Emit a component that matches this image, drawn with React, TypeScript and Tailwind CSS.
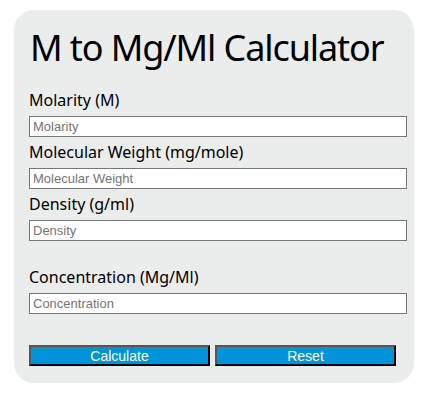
import React from 'react';

const fields = [
  { label: 'Molarity (M)', placeholder: 'Molarity' },
  { label: 'Molecular Weight (mg/mole)', placeholder: 'Molecular Weight' },
  { label: 'Density (g/ml)', placeholder: 'Density' },
];

const Field = ({ label, placeholder }: { label: string; placeholder: string }) => (
  <div>
    <label className="block text-[16px] leading-[24px] mt-[3px] mb-[4px] text-black">{label}</label>
    <input
      type="text"
      placeholder={placeholder}
      className="block w-[378px] h-[21px] bg-white border border-[#767676] px-[3px] text-[13px] placeholder:text-[#757575] font-['Liberation_Sans',Arial,sans-serif] outline-none"
    />
  </div>
);

const App: React.FC = () => {
  return (
    <div className="bg-white w-[436px] h-[405px] pt-[10px] pl-[14px] font-['Noto_Sans',sans-serif]">
      <div className="w-[400px] h-[373px] bg-[#ebecec] rounded-[20px] px-[15px] pt-[16px]">
        <h1 className="text-[36px] leading-[44px] tracking-[-1.1px] whitespace-nowrap text-black font-normal pl-px">
          M to Mg/Ml Calculator
        </h1>
        <div className="mt-[18px]">
          {fields.map((f) => (
            <Field key={f.label} label={f.label} placeholder={f.placeholder} />
          ))}
        </div>
        <div className="mt-[24px]">
          <Field label="Concentration (Mg/Ml)" placeholder="Concentration" />
        </div>
        <div className="flex gap-[5px] mt-[31px] font-['Liberation_Sans',Arial,sans-serif]">
          <button className="w-[181px] h-[21px] bg-[#0095db] text-white text-[14px] leading-none border-2 border-t-[#555] border-l-[#555] border-b-black border-r-black">
            Calculate
          </button>
          <button className="w-[181px] h-[21px] bg-[#0095db] text-white text-[14px] leading-none border-2 border-t-[#555] border-l-[#555] border-b-black border-r-black">
            Reset
          </button>
        </div>
      </div>
    </div>
  );
};

export default App;
